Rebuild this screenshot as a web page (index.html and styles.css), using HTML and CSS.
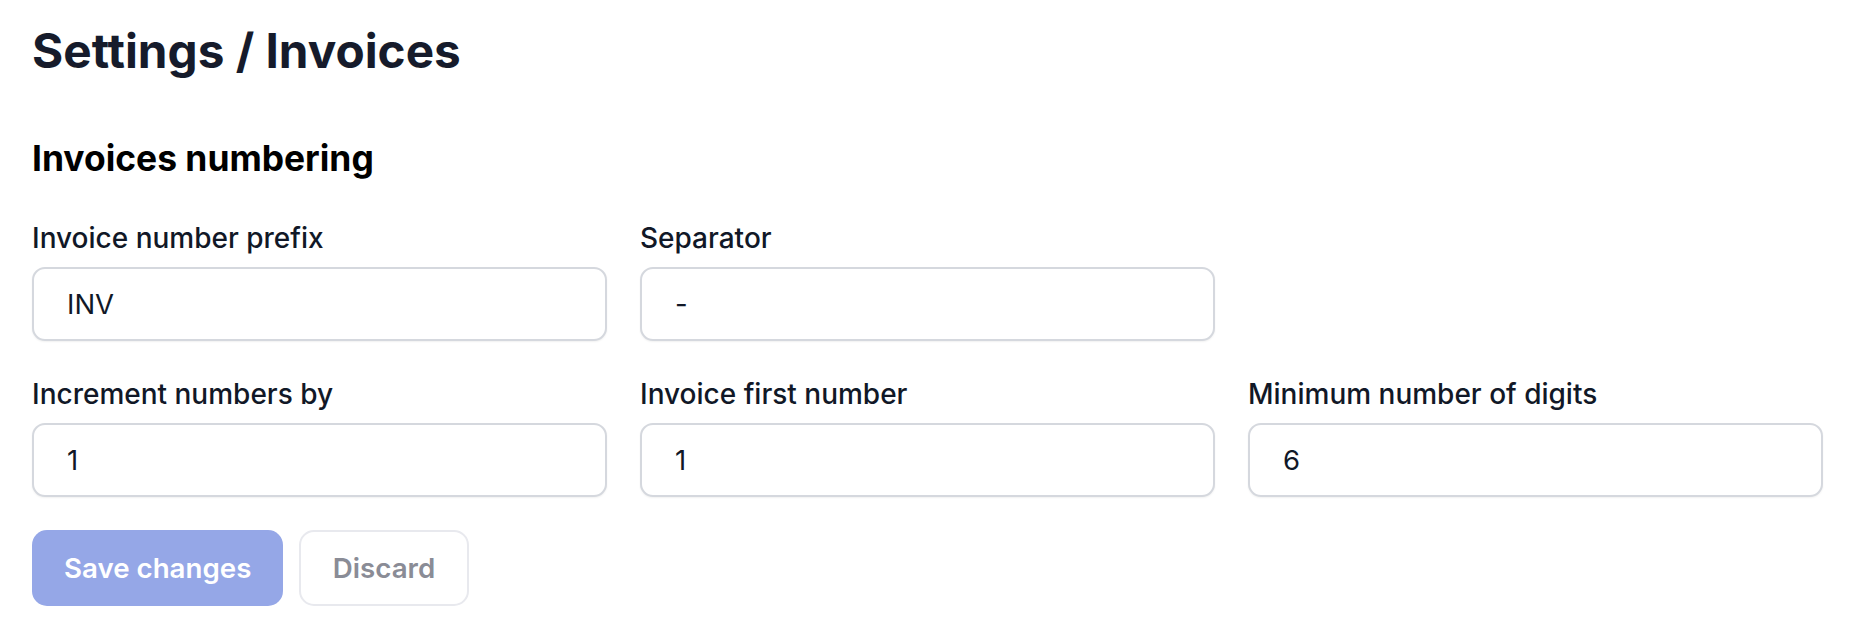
FILE: index.html
```html
<!DOCTYPE html>
<html lang="en">
<head>
<meta charset="utf-8">
<title>Settings / Invoices</title>
<link rel="stylesheet" href="styles.css">
</head>
<body>
<main class="page">
  <h1 class="page-title">Settings / Invoices</h1>
  <section class="section">
    <h2 class="section-title">Invoices numbering</h2>
    <div class="form-grid">
      <label class="field">
        <span class="field-label">Invoice number prefix</span>
        <input class="field-input" type="text" value="INV">
      </label>
      <label class="field">
        <span class="field-label">Separator</span>
        <input class="field-input" type="text" value="-">
      </label>
      <div class="field field-empty"></div>
      <label class="field">
        <span class="field-label">Increment numbers by</span>
        <input class="field-input" type="text" value="1">
      </label>
      <label class="field">
        <span class="field-label">Invoice first number</span>
        <input class="field-input" type="text" value="1">
      </label>
      <label class="field">
        <span class="field-label">Minimum number of digits</span>
        <input class="field-input" type="text" value="6">
      </label>
    </div>
    <div class="actions">
      <button class="btn btn-primary" type="button">Save changes</button>
      <button class="btn btn-secondary" type="button">Discard</button>
    </div>
  </section>
</main>
</body>
</html>
```

FILE: styles.css
```css
* {
  box-sizing: border-box;
}

html, body {
  margin: 0;
  padding: 0;
  background: #ffffff;
}

body {
  font-family: Inter, "Noto Sans", "Liberation Sans", sans-serif;
  color: #111827;
}

.page {
  padding: 27px 41px 0 32px;
}

.page-title {
  margin: 0;
  font-size: 47.7px;
  line-height: 48px;
  font-weight: 700;
  color: #161b2b;
}

.section {
  margin-top: 66px;
}

.section-title {
  margin: 0;
  font-size: 35.4px;
  line-height: 36px;
  font-weight: 700;
  color: #000000;
}

.form-grid {
  margin-top: 48px;
  display: grid;
  grid-template-columns: repeat(3, 1fr);
  column-gap: 33px;
  row-gap: 40px;
}

.field {
  display: flex;
  flex-direction: column;
  gap: 15px;
}

.field-label {
  font-size: 28px;
  line-height: 27px;
  font-weight: 500;
  color: #111827;
}

.field-input {
  height: 74px;
  width: 100%;
  padding: 0 33px;
  border: 2px solid #d5d8de;
  border-radius: 13px;
  background: #ffffff;
  box-shadow: 0 1px 2px rgba(0, 0, 0, 0.06);
  font-family: inherit;
  font-size: 27.5px;
  color: #111827;
  outline: none;
}

.actions {
  margin-top: 33px;
  display: flex;
  gap: 16px;
}

.btn {
  height: 76px;
  padding: 0 30px;
  border-radius: 15px;
  border: 2px solid transparent;
  font-family: inherit;
  font-size: 27.7px;
  font-weight: 600;
  cursor: pointer;
}

.btn-primary {
  background: #95a7e7;
  color: #ffffff;
}

.btn-secondary {
  padding: 0 31.5px;
  background: #ffffff;
  border-color: #e8e9ee;
  color: #8a8c96;
}
```
